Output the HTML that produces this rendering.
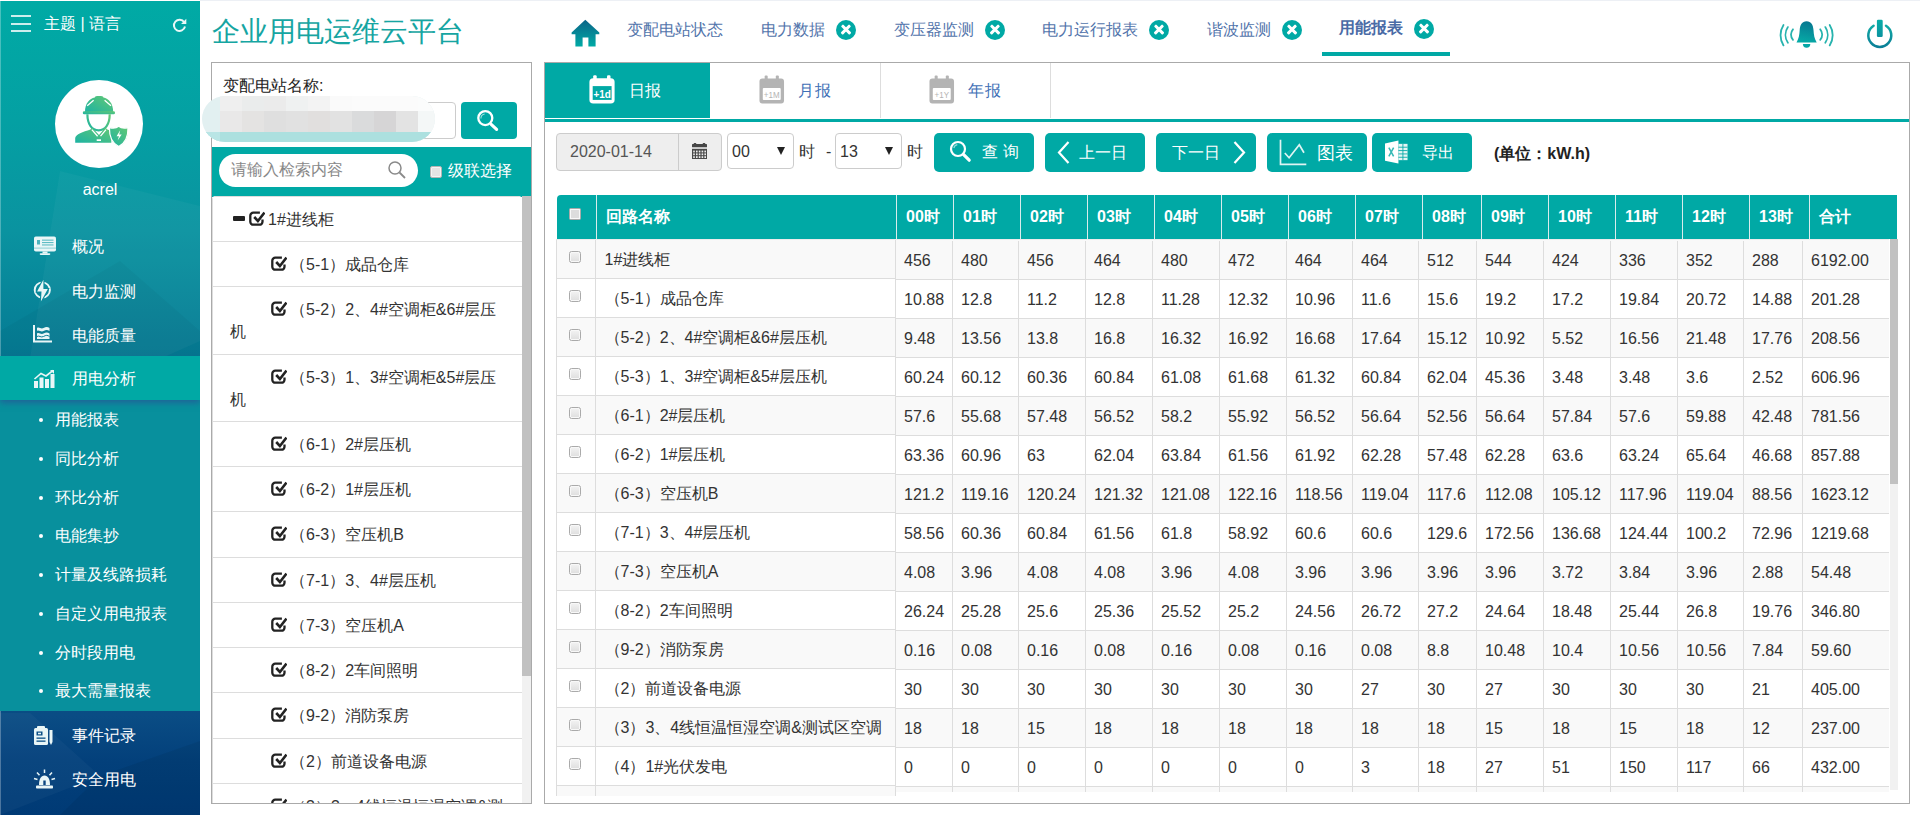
<!DOCTYPE html>
<html lang="zh"><head>
<meta charset="utf-8">
<title>企业用电运维云平台</title>
<style>
*{box-sizing:border-box;margin:0;padding:0}
html,body{width:1920px;height:815px;overflow:hidden;background:#fff;font-family:"Liberation Sans",sans-serif;font-size:16px;color:#333}
.abs{position:absolute}
#topstrip{position:absolute;left:200px;top:0;width:1720px;height:1px;background:#edf0f5}
/* sidebar */
#side{position:absolute;left:0;top:1px;width:200px;height:814px;overflow:hidden;
 background:linear-gradient(180deg,#00aaa5 0px,#04a0a3 120px,#0a93a0 230px,#067d95 340px,#056a8f 420px,#0a4c84 715px,#03407b 760px,#003a75 814px)}
#side .poly{position:absolute;left:0;top:0}
#side .ham{position:absolute;left:11px;top:14px;width:20px;height:17px}
#side .ham i{position:absolute;left:0;width:20px;height:2px;background:rgba(255,255,255,.8)}
#side .theme{position:absolute;left:44px;top:12px;font-size:16px;line-height:22px;color:#fff;white-space:nowrap}
#side .refresh{position:absolute;left:172px;top:17px}
#side .avatar{position:absolute;left:55px;top:78.500px;width:88px;height:88px;border-radius:50%;background:#fff}
#side .uname{position:absolute;left:0;top:178px;width:200px;text-align:center;color:#fff;font-size:16px;line-height:22px}
.mi{position:absolute;left:0;width:200px;height:44px;color:#fff;font-size:16px;line-height:44px;padding-left:72px;white-space:nowrap}
.mi svg{position:absolute;left:33px;top:11px}
.mi.act{background:#00a9a5;box-shadow:0 3px 6px rgba(45,75,150,.62);z-index:3}
.mi.act svg{top:12px}
#sub{position:absolute;left:0;top:399px;width:200px;height:311px;background:#08909d}
.si{position:absolute;left:55px;color:#fff;font-size:16px;line-height:22px;white-space:nowrap}
.si:before{content:"";position:absolute;left:-16px;top:9px;width:4px;height:4px;border-radius:50%;background:#fff}
/* header */
#title{position:absolute;left:212px;top:12px;font-size:28px;line-height:40px;color:#16a5a2;white-space:nowrap;letter-spacing:0px}
.tab{position:absolute;top:19px;font-size:16px;line-height:22px;color:#5274ab;white-space:nowrap}
.tab.on{font-weight:bold;top:17px;color:#4a6ba6}
.cl{position:absolute;width:20px;height:20px;border-radius:50%;background:#00a9a5}
.cl:before,.cl:after{content:"";position:absolute;left:4px;top:8.3px;width:12px;height:3.4px;border-radius:1px;background:#fff;transform:rotate(45deg)}
.cl:after{transform:rotate(-45deg)}
#uline{position:absolute;left:1322px;top:52px;width:128px;height:4px;background:#00a9a5}
/* panels */
#lp{position:absolute;left:211px;top:62px;width:321px;height:742px;border:1px solid #aaa;background:#fff;overflow:hidden}
#mp{position:absolute;left:544px;top:62px;width:1366px;height:742px;border:1px solid #aaa;background:#fff;overflow:hidden}
/* left panel */
#lp .lbl{position:absolute;left:11px;top:12px;font-size:16px;line-height:22px;color:#222}
#lp .inp{position:absolute;left:10px;top:39px;width:234px;height:37px;border:1px solid #ccc;border-radius:4px;background:#fff}
#lp .sbtn{position:absolute;left:249px;top:39px;width:56px;height:37px;border-radius:4px;background:#00a9a5}
#blur{position:absolute;left:202px;top:96px;width:233px;height:46px;border-radius:23px;background:#e2f0f1;overflow:hidden}
#blur i{position:absolute;display:block}
#lp .bar{position:absolute;left:0;top:84px;width:319px;height:50px;background:#00a9a5}
#lp .pill{position:absolute;left:7px;top:7px;width:199px;height:33px;border-radius:17px;background:#fff}
#lp .pill>span{position:absolute;left:12px;top:5px;font-size:16px;line-height:22px;color:#888}
#lp .ccb{position:absolute;left:218px;top:19px;width:12px;height:12px;border:1px solid #b5b5b5;border-radius:2px;background:#e4e4e4;box-shadow:inset 0 0 0 1px #f4f4f4}
#lp .ctx{position:absolute;left:236px;top:13px;color:#fff;font-size:16px;line-height:22px;white-space:nowrap}
#tree{position:absolute;left:0;top:133px;width:310px;height:610px;overflow:hidden;background:#fff;border-radius:4px 4px 0 0}
#tsb{position:absolute;left:310px;top:133px;width:9px;height:610px;background:#f1f1f1}
#tsb i{position:absolute;left:0;top:0;width:9px;height:480px;background:#c1c1c1}
.ti{position:absolute;left:0;width:310px;padding:11.75px 12px 0 17px;border-top:1px solid #ddd;border-left:1px solid #ddd;line-height:22.7px;font-size:16px;color:#333;white-space:nowrap}
.ti .minus{display:inline-block;width:12px;height:4.5px;background:#222;border-radius:1px;vertical-align:middle;margin:0 4px 4px 3px}
.ti .ind{display:inline-block;width:41px;height:1px}
.ti .chk{vertical-align:-2px}
.ti .t0{margin-left:3px}
.ti .t1{margin-left:3px}
/* main panel */
.st{position:absolute;top:0;width:170px;height:55px;border-right:1px solid #ddd;font-size:16px;line-height:55px;color:#3f70b6;white-space:nowrap}
.st.on{background:#00a9a5;color:#fff;border-right:none;width:165px}
.st svg{position:absolute;top:12px}
.st>span{position:absolute;top:0}
#sline{position:absolute;left:0;top:56px;width:1364px;height:3px;background:#00a9a5}
#dt{position:absolute;left:11px;top:70px;width:166px;height:38px;border:1px solid #ccc;border-radius:4px;background:#eee}
#dt .v{position:absolute;left:13px;top:7px;font-size:16px;line-height:22px;color:#555}
#dt .d{position:absolute;left:121px;top:0;width:1px;height:36px;background:#ccc}
.sel{position:absolute;top:70px;width:67px;height:36px;border:1px solid #ccc;border-radius:4px;background:#fff;font-size:16px;line-height:36px;color:#333;padding-left:4px}
.sel:after{content:"";position:absolute;right:8px;top:13px;border-left:4.5px solid transparent;border-right:4.5px solid transparent;border-top:8px solid #222}
.tx{position:absolute;top:78px;font-size:16px;line-height:22px;color:#333;white-space:nowrap}
.btn{position:absolute;top:70px;width:100px;height:39px;border-radius:5px;background:#00a9a5;color:#fff;font-size:16px;line-height:39px;white-space:nowrap}
.btn>span{position:absolute;top:0}
.btn svg{position:absolute}
#unit{position:absolute;left:949px;top:80px;font-size:16px;line-height:22px;font-weight:bold;color:#222;white-space:nowrap}
/* table */
.thead{position:absolute;left:12px;top:132px;width:1340px;height:44px;background:#00a9a5;border-radius:4px 0 0 0;overflow:hidden}
.hc{position:absolute;top:0;height:44px;border-left:1px solid #d9ecec;color:#fff;font-weight:bold;font-size:16px;line-height:43px;padding-left:9px;white-space:nowrap}
.hc.first{border-left:none}
.fix{position:absolute;left:11px;top:176px;width:340px;height:557px;overflow:hidden;background:#f9f9f9;border-top:1px solid #ececec;border-left:1px solid #ddd}
.main{position:absolute;left:351px;top:176px;width:993px;height:553px;overflow:hidden;background:#f9f9f9;border-top:1px solid #ececec}
#bsb{position:absolute;left:1345px;top:176px;width:8px;height:551px;background:#f1f1f1}
#bsb i{position:absolute;left:0;top:0;width:8px;height:245px;background:#c1c1c1}
.tr{position:absolute;left:0;width:100%;height:39px;background:#fff}
.tr.odd{background:#f9f9f9}
.td{position:absolute;top:0;height:39px;border-right:1px solid #ddd;border-bottom:1px solid #ddd;font-size:16px;line-height:41px;padding-left:8.5px;color:#333;white-space:nowrap;overflow:hidden}
.td.nm{padding-left:8.5px}
.main .td{line-height:39px;padding-left:8px}
.fix .td{line-height:40px}
.cb{position:absolute;left:12px;top:11px;width:12px;height:12px;border:1px solid #aaa;border-radius:2.5px;background:linear-gradient(#f3f3f3,#dedede);box-shadow:inset 0 0 0 1px #f8f8f8}
.hcb{top:13px;left:12px;border-radius:1.5px;background:#ddd}
.j{display:inline-block;text-align:justify;text-align-last:justify;white-space:nowrap}
</style>
</head>
<body>
<div id="topstrip"></div>

<!-- ============ SIDEBAR ============ -->
<div id="side">
 <svg class="poly" width="200" height="814" viewBox="0 0 200 814">
  <polygon points="0,0 200,0 200,160 0,200" fill="#fff" fill-opacity="0"></polygon>
  <polygon points="60,170 200,205 200,340 20,420" fill="#fff" fill-opacity=".035"></polygon>
  <polygon points="0,330 120,260 200,330 200,400 0,400" fill="#000" fill-opacity=".03"></polygon>
  <polygon points="0,712 30,712 100,775 0,814" fill="#fff" fill-opacity=".03"></polygon>
  <polygon points="100,775 200,740 200,814 60,814" fill="#000" fill-opacity=".06"></polygon>
 </svg>
 <div class="abs" style="left:0;top:0;width:1px;height:814px;background:rgba(255,255,255,.28)"></div>
 <div class="ham"><i style="top:0"></i><i style="top:8px"></i><i style="top:15px"></i></div>
 <div class="theme"><span class="j" style="width:77.07px">主题 | 语言</span></div>
 <svg class="refresh" width="15" height="15" viewBox="0 0 15 15"><path d="M12.2 4.2A5.6 5.6 0 1 0 13 8.6" fill="none" stroke="#e8f7f6" stroke-width="2"></path><path d="M14.3 0.8v5.2H9.1z" fill="#e8f7f6"></path></svg>
 <div class="avatar">
  <svg width="88" height="88" viewBox="0 0 88 88">
   <defs><linearGradient id="ag" x1="1" y1="0" x2="0" y2="1"><stop offset="0" stop-color="#63c873"></stop><stop offset="1" stop-color="#1db3a3"></stop></linearGradient></defs>
   <path d="M30 32C30 23.500 34.500 18.600 39.800 17.600V17.500C39.800 16.600 41.500 16.100 44.100 16.100S48.400 16.600 48.400 17.500V17.600C53.700 18.600 58.200 23.500 58.200 32Z" fill="url(#ag)"></path>
   <rect x="27.800" y="31.300" width="32.200" height="3" rx="1.400" fill="url(#ag)"></rect>
   <path d="M32.200 25.700L38.600 20.200M56 25.700L49.600 20.200" stroke="#fff" stroke-width="1.300"></path>
   <path d="M32.400 34.300C32.400 44.500 37 50.300 43.600 50.300S54.700 44.500 54.700 34.300" fill="none" stroke="url(#ag)" stroke-width="2.200"></path>
   <path d="M20.200 62.800V58C20.600 54.200 28 51.800 35.400 49.400L37.200 47.600L44 55L50.300 47.600L52.400 49.400C54 50 55.500 50.400 56.300 51V62.800Z" fill="url(#ag)"></path>
   <path d="M36.800 49.600L42.600 56.200M51 49.600L45.500 56.200" stroke="#fff" stroke-width="1.300" fill="none"></path>
   <rect x="41.700" y="59.300" width="4.300" height="1.700" fill="#fff"></rect>
   <path d="M63.700 46.300C66 48.200 69.200 48.500 73 47.600C73.200 58 70.200 63.400 63.700 66.600C57.200 63.400 54.200 58 54.400 47.600C58.200 48.500 61.400 48.200 63.700 46.300Z" fill="url(#ag)" stroke="#fff" stroke-width="1.200"></path>
   <path d="M65.200 50.300L61.600 56.300H64L62.600 60.600L66.700 54.400H64.200Z" fill="#fff"></path>
  </svg>
 </div>
 <div class="uname">acrel</div>

 <div class="mi" style="top:224px"><svg style="top:10px" width="24" height="22" viewBox="0 0 24 22"><rect x="1" y="1.500" width="22" height="15" rx="1.800" fill="#e9f6f7"></rect><rect x="4" y="5" width="3" height="4.500" fill="#4db3bd"></rect><rect x="9" y="4.600" width="11.500" height="1.100" fill="#5fbcc4"></rect><rect x="9" y="7" width="11.500" height="1.100" fill="#5fbcc4"></rect><rect x="9" y="9.400" width="11.500" height="1.100" fill="#5fbcc4"></rect><rect x="1" y="12.600" width="22" height="1" fill="#8fd0d5"></rect><rect x="9.500" y="16.500" width="5" height="2" fill="#e9f6f7"></rect><rect x="6.700" y="18.300" width="10.600" height="1.600" rx=".8" fill="#e9f6f7"></rect></svg><span class="j" style="width:32.02px">概况</span></div>
 <div class="mi" style="top:269px"><svg style="top:9px" width="24" height="24" viewBox="0 0 24 24"><circle cx="9.300" cy="11" r="7.600" fill="none" stroke="#e9f6f7" stroke-width="1.900"></circle><path d="M10.400 .8L4.100 12.500H8.500L7.900 22.500L14.800 10H10.400Z" fill="#e9f6f7" stroke="#0a8b9c" stroke-width="2.200" paint-order="stroke"></path></svg><span class="j" style="width:64.02px">电力监测</span></div>
 <div class="mi" style="top:313px"><svg style="top:9px" width="24" height="22" viewBox="0 0 24 22"><path d="M1 2v16.500h18" fill="none" stroke="#e9f6f7" stroke-width="2"></path><path d="M4 5c2-1.500 4 1.500 6.500 0s4-1.500 6 0v3c-2-1.500-3.500-1.500-6 0s-4.500-1.500-6.500 0z" fill="#e9f6f7"></path><path d="M4 10.500c2-1.500 4 1.500 6.500 0s4-1.500 6 0V16H4z" fill="#e9f6f7"></path><path d="M4 13.500c2-1.500 4 1.500 6.500 0s4-1.500 6 0" fill="none" stroke="#0b7f97" stroke-width="1"></path></svg><span class="j" style="width:64.02px">电能质量</span></div>
 <div class="mi act" style="top:355px;line-height:46px"><svg width="24" height="22" viewBox="0 0 24 22"><rect x="1" y="13" width="4" height="7" fill="#e9f6f7"></rect><rect x="6.500" y="9.500" width="4" height="10.500" fill="#e9f6f7"></rect><rect x="12" y="11" width="4" height="9" fill="#e9f6f7"></rect><rect x="17.500" y="6" width="4" height="14" fill="#e9f6f7"></rect><path d="M1.500 11l6.500-5.500 5 2.500 7-5.500" fill="none" stroke="#e9f6f7" stroke-width="1.600"></path><path d="M17 2h4v4z" fill="#e9f6f7"></path></svg><span class="j" style="width:64.02px">用电分析</span></div>
 <div id="sub">
  <div class="si" style="top:9px"><span class="j" style="width:64.02px">用能报表</span></div>
  <div class="si" style="top:48px"><span class="j" style="width:64.02px">同比分析</span></div>
  <div class="si" style="top:87px"><span class="j" style="width:64.02px">环比分析</span></div>
  <div class="si" style="top:125px"><span class="j" style="width:64.02px">电能集抄</span></div>
  <div class="si" style="top:164px"><span class="j" style="width:112.02px">计量及线路损耗</span></div>
  <div class="si" style="top:203px"><span class="j" style="width:112.02px">自定义用电报表</span></div>
  <div class="si" style="top:242px"><span class="j" style="width:80.02px">分时段用电</span></div>
  <div class="si" style="top:280px"><span class="j" style="width:96.02px">最大需量报表</span></div>
 </div>
 <div class="mi" style="top:713px"><svg width="24" height="22" viewBox="0 0 24 22"><rect x="1" y="3" width="14" height="17" rx="1.500" fill="#e9f6f7"></rect><rect x="4" y="1" width="8" height="3.500" rx="1" fill="#e9f6f7"></rect><rect x="3.500" y="6.500" width="6" height="4" fill="#0b4f86"></rect><rect x="5" y="7.700" width="3" height="1.600" fill="#e9f6f7"></rect><rect x="3.500" y="12.500" width="9" height="1.300" fill="#0b4f86"></rect><rect x="3.500" y="15.500" width="9" height="1.300" fill="#0b4f86"></rect><path d="M16.500 5h3v12l-1.500 3-1.500-3z" fill="#e9f6f7"></path></svg><span class="j" style="width:64.02px">事件记录</span></div>
 <div class="mi" style="top:757px"><svg width="24" height="22" viewBox="0 0 24 22"><path d="M6 16c0-6 2-9.500 5.500-9.500S17 10 17 16z" fill="#e9f6f7"></path><rect x="3" y="16.500" width="17" height="3" rx=".8" fill="#e9f6f7"></rect><rect x="10.300" y="11.500" width="2.400" height="4.500" fill="#0b4680"></rect><path d="M11.500 .5v3.500M4 3.500l2.500 2.800M19 3.500l-2.500 2.800M1 9.500l3.500 1M22 9.500l-3.500 1" stroke="#e9f6f7" stroke-width="1.500"></path></svg><span class="j" style="width:64.02px">安全用电</span></div>
</div>

<!-- ============ HEADER ============ -->
<div id="title"><span class="j" style="width:252.02px">企业用电运维云平台</span></div>
<svg class="abs" style="left:571px;top:19px" width="29" height="29" viewBox="0 0 29 29">
 <defs><linearGradient id="hg" x1="0" y1="0" x2="0" y2="1"><stop offset="0" stop-color="#0b6487"></stop><stop offset="1" stop-color="#00aaa5"></stop></linearGradient></defs>
 <path d="M14.300 .800L.600 13.600v1.700h3.800v12.200h7.200v-9h5.800v9h7.200V15.300h3.700v-1.700z" fill="url(#hg)"></path>
</svg>
<div class="tab" style="left:627px"><span class="j" style="width:96.02px">变配电站状态</span></div>
<div class="tab" style="left:761px"><span class="j" style="width:64.02px">电力数据</span></div><div class="cl" style="left:836px;top:20px"></div>
<div class="tab" style="left:894px"><span class="j" style="width:80.02px">变压器监测</span></div><div class="cl" style="left:985px;top:20px"></div>
<div class="tab" style="left:1042px"><span class="j" style="width:96.02px">电力运行报表</span></div><div class="cl" style="left:1149px;top:20px"></div>
<div class="tab" style="left:1207px"><span class="j" style="width:64.02px">谐波监测</span></div><div class="cl" style="left:1282px;top:20px"></div>
<div class="tab on" style="left:1339px"><span class="j" style="width:64.02px">用能报表</span></div><div class="cl" style="left:1414px;top:19px"></div>
<div id="uline"></div>
<!-- bell -->
<svg class="abs" style="left:1776px;top:18px" width="62" height="32" viewBox="0 0 62 32">
 <defs><linearGradient id="bg1" x1="0.600" y1="0" x2="0.400" y2="1"><stop offset="0" stop-color="#077790"></stop><stop offset="1" stop-color="#06aaa6"></stop></linearGradient></defs>
 <path d="M30.600 3.300C26 3.300 24 7 23.700 12C23.400 17 22.800 20.500 20.500 24.500H40.700C38.400 20.500 37.800 17 37.500 12C37.200 7 35.200 3.300 30.600 3.300Z" fill="url(#bg1)"></path>
 <path d="M26.900 26H34.300A3.700 3.700 0 0 1 26.900 26Z" fill="#06a7a6"></path>
 <path d="M7.500 7A19 19 0 0 0 7.500 27.400M11.900 9.100A14 14 0 0 0 11.900 24.800M17 11.300A8 8 0 0 0 17 21.900M53.700 7A19 19 0 0 1 53.700 27.400M49.300 9.100A14 14 0 0 1 49.300 24.800M44.200 11.300A8 8 0 0 1 44.200 21.900" fill="none" stroke="#27b3ae" stroke-width="1.800" stroke-linecap="round"></path>
</svg>
<!-- power -->
<svg class="abs" style="left:1865px;top:19px" width="30" height="31" viewBox="0 0 30 31">
 <defs><linearGradient id="pg" x1="0" y1="0" x2="0" y2="1"><stop offset="0" stop-color="#12aaa6"></stop><stop offset="1" stop-color="#0a7f97"></stop></linearGradient>
 <linearGradient id="pg2" x1="0" y1="0" x2="0" y2="1"><stop offset="0" stop-color="#08aca7"></stop><stop offset="1" stop-color="#0b93a0"></stop></linearGradient></defs>
 <path d="M8.600 6.700A11.500 11.500 0 1 0 21 6.700" fill="none" stroke="url(#pg)" stroke-width="2.500" stroke-linecap="round"></path>
 <rect x="11.900" y="0.800" width="5.800" height="17.200" rx="1.200" fill="url(#pg2)"></rect>
</svg>

<!-- ============ LEFT PANEL ============ -->
<div id="lp">
 <div class="lbl"><span class="j" style="width:100.48px">变配电站名称:</span></div>
 <div class="inp"></div>
 <div class="sbtn"><svg width="56" height="37" viewBox="0 0 56 37"><circle cx="24.300" cy="16.100" r="7" fill="none" stroke="#fff" stroke-width="2.300"></circle><path d="M30.200 22.400L35.600 27.400" stroke="#fff" stroke-width="3.200" stroke-linecap="round"></path><path d="M19.900 16.600A4.600 4.600 0 0 1 23.600 12" fill="none" stroke="#a5e2df" stroke-width="1.100"></path></svg></div>
 <div class="bar">
  <div class="pill"><span><span class="j" style="width:112.02px">请输入检索内容</span></span>
   <svg class="abs" style="left:168px;top:6px" width="20" height="20" viewBox="0 0 20 20"><circle cx="8" cy="8" r="6" fill="none" stroke="#8a8a8a" stroke-width="1.500"></circle><path d="M12.500 12.500l5.500 5.500" stroke="#8a8a8a" stroke-width="1.800"></path></svg>
  </div>
  <div class="ccb"></div>
  <div class="ctx"><span class="j" style="width:64.02px">级联选择</span></div>
 </div>
 <div id="tree">
<div class="ti" style="top:0px;height:45px"><span class="minus"></span><svg class="chk" viewBox="0 0 16 16" width="16" height="16"><path d="M10.9 1.7H4.3A3 3 0 0 0 1.3 4.7V10.7A3 3 0 0 0 4.3 13.7H10.5A3 3 0 0 0 13.5 10.7V8.4" fill="none" stroke="#222" stroke-width="2.3"></path><path d="M5.2 6L8.9 10L15.5 1.6" fill="none" stroke="#222" stroke-width="2.6"></path></svg><span class="t0"><span class="j" style="width:65.82px">1#进线柜</span></span></div>
<div class="ti" style="top:45px;height:45px"><span class="ind"></span><svg class="chk" viewBox="0 0 16 16" width="16" height="16"><path d="M10.9 1.7H4.3A3 3 0 0 0 1.3 4.7V10.7A3 3 0 0 0 4.3 13.7H10.5A3 3 0 0 0 13.5 10.7V8.4" fill="none" stroke="#222" stroke-width="2.3"></path><path d="M5.2 6L8.9 10L15.5 1.6" fill="none" stroke="#222" stroke-width="2.6"></path></svg><span class="t1"><span class="j" style="width:119.15px">（5-1）成品仓库</span></span></div>
<div class="ti" style="top:90px;height:68px"><span class="ind"></span><svg class="chk" viewBox="0 0 16 16" width="16" height="16"><path d="M10.9 1.7H4.3A3 3 0 0 0 1.3 4.7V10.7A3 3 0 0 0 4.3 13.7H10.5A3 3 0 0 0 13.5 10.7V8.4" fill="none" stroke="#222" stroke-width="2.3"></path><path d="M5.2 6L8.9 10L15.5 1.6" fill="none" stroke="#222" stroke-width="2.6"></path></svg><span class="t1"><span class="j" style="width:206.32px">（5-2）2、4#空调柜&amp;6#层压</span><br><span class="j" style="width:16.02px">机</span></span></div>
<div class="ti" style="top:158px;height:67px"><span class="ind"></span><svg class="chk" viewBox="0 0 16 16" width="16" height="16"><path d="M10.9 1.7H4.3A3 3 0 0 0 1.3 4.7V10.7A3 3 0 0 0 4.3 13.7H10.5A3 3 0 0 0 13.5 10.7V8.4" fill="none" stroke="#222" stroke-width="2.3"></path><path d="M5.2 6L8.9 10L15.5 1.6" fill="none" stroke="#222" stroke-width="2.6"></path></svg><span class="t1"><span class="j" style="width:206.32px">（5-3）1、3#空调柜&amp;5#层压</span><br><span class="j" style="width:16.02px">机</span></span></div>
<div class="ti" style="top:225px;height:45px"><span class="ind"></span><svg class="chk" viewBox="0 0 16 16" width="16" height="16"><path d="M10.9 1.7H4.3A3 3 0 0 0 1.3 4.7V10.7A3 3 0 0 0 4.3 13.7H10.5A3 3 0 0 0 13.5 10.7V8.4" fill="none" stroke="#222" stroke-width="2.3"></path><path d="M5.2 6L8.9 10L15.5 1.6" fill="none" stroke="#222" stroke-width="2.6"></path></svg><span class="t1"><span class="j" style="width:120.95px">（6-1）2#层压机</span></span></div>
<div class="ti" style="top:270px;height:45px"><span class="ind"></span><svg class="chk" viewBox="0 0 16 16" width="16" height="16"><path d="M10.9 1.7H4.3A3 3 0 0 0 1.3 4.7V10.7A3 3 0 0 0 4.3 13.7H10.5A3 3 0 0 0 13.5 10.7V8.4" fill="none" stroke="#222" stroke-width="2.3"></path><path d="M5.2 6L8.9 10L15.5 1.6" fill="none" stroke="#222" stroke-width="2.6"></path></svg><span class="t1"><span class="j" style="width:120.95px">（6-2）1#层压机</span></span></div>
<div class="ti" style="top:315px;height:46px"><span class="ind"></span><svg class="chk" viewBox="0 0 16 16" width="16" height="16"><path d="M10.9 1.7H4.3A3 3 0 0 0 1.3 4.7V10.7A3 3 0 0 0 4.3 13.7H10.5A3 3 0 0 0 13.5 10.7V8.4" fill="none" stroke="#222" stroke-width="2.3"></path><path d="M5.2 6L8.9 10L15.5 1.6" fill="none" stroke="#222" stroke-width="2.6"></path></svg><span class="t1"><span class="j" style="width:113.82px">（6-3）空压机B</span></span></div>
<div class="ti" style="top:361px;height:45px"><span class="ind"></span><svg class="chk" viewBox="0 0 16 16" width="16" height="16"><path d="M10.9 1.7H4.3A3 3 0 0 0 1.3 4.7V10.7A3 3 0 0 0 4.3 13.7H10.5A3 3 0 0 0 13.5 10.7V8.4" fill="none" stroke="#222" stroke-width="2.3"></path><path d="M5.2 6L8.9 10L15.5 1.6" fill="none" stroke="#222" stroke-width="2.6"></path></svg><span class="t1"><span class="j" style="width:145.85px">（7-1）3、4#层压机</span></span></div>
<div class="ti" style="top:406px;height:45px"><span class="ind"></span><svg class="chk" viewBox="0 0 16 16" width="16" height="16"><path d="M10.9 1.7H4.3A3 3 0 0 0 1.3 4.7V10.7A3 3 0 0 0 4.3 13.7H10.5A3 3 0 0 0 13.5 10.7V8.4" fill="none" stroke="#222" stroke-width="2.3"></path><path d="M5.2 6L8.9 10L15.5 1.6" fill="none" stroke="#222" stroke-width="2.6"></path></svg><span class="t1"><span class="j" style="width:113.82px">（7-3）空压机A</span></span></div>
<div class="ti" style="top:451px;height:45px"><span class="ind"></span><svg class="chk" viewBox="0 0 16 16" width="16" height="16"><path d="M10.9 1.7H4.3A3 3 0 0 0 1.3 4.7V10.7A3 3 0 0 0 4.3 13.7H10.5A3 3 0 0 0 13.5 10.7V8.4" fill="none" stroke="#222" stroke-width="2.3"></path><path d="M5.2 6L8.9 10L15.5 1.6" fill="none" stroke="#222" stroke-width="2.6"></path></svg><span class="t1"><span class="j" style="width:128.06px">（8-2）2车间照明</span></span></div>
<div class="ti" style="top:496px;height:46px"><span class="ind"></span><svg class="chk" viewBox="0 0 16 16" width="16" height="16"><path d="M10.9 1.7H4.3A3 3 0 0 0 1.3 4.7V10.7A3 3 0 0 0 4.3 13.7H10.5A3 3 0 0 0 13.5 10.7V8.4" fill="none" stroke="#222" stroke-width="2.3"></path><path d="M5.2 6L8.9 10L15.5 1.6" fill="none" stroke="#222" stroke-width="2.6"></path></svg><span class="t1"><span class="j" style="width:119.15px">（9-2）消防泵房</span></span></div>
<div class="ti" style="top:542px;height:45px"><span class="ind"></span><svg class="chk" viewBox="0 0 16 16" width="16" height="16"><path d="M10.9 1.7H4.3A3 3 0 0 0 1.3 4.7V10.7A3 3 0 0 0 4.3 13.7H10.5A3 3 0 0 0 13.5 10.7V8.4" fill="none" stroke="#222" stroke-width="2.3"></path><path d="M5.2 6L8.9 10L15.5 1.6" fill="none" stroke="#222" stroke-width="2.6"></path></svg><span class="t1"><span class="j" style="width:136.93px">（2）前道设备电源</span></span></div>
<div class="ti" style="top:587px;height:68px"><span class="ind"></span><svg class="chk" viewBox="0 0 16 16" width="16" height="16"><path d="M10.9 1.7H4.3A3 3 0 0 0 1.3 4.7V10.7A3 3 0 0 0 4.3 13.7H10.5A3 3 0 0 0 13.5 10.7V8.4" fill="none" stroke="#222" stroke-width="2.3"></path><path d="M5.2 6L8.9 10L15.5 1.6" fill="none" stroke="#222" stroke-width="2.6"></path></svg><span class="t1"><span class="j" style="width:213.40px">（3）3、4线恒温恒湿空调&amp;测</span><br><span class="j" style="width:64.02px">试区空调</span></span></div>
 </div>
 <div id="tsb"><i></i></div>
</div>
<div id="blur">
 <i style="left:18px;top:0;width:22px;height:15px;background:#efefef"></i><i style="left:18px;top:15px;width:22px;height:22px;background:#e9e8e8"></i>
 <i style="left:40px;top:0;width:22px;height:15px;background:#eaecec"></i><i style="left:40px;top:15px;width:22px;height:22px;background:#e4e3e2"></i>
 <i style="left:62px;top:0;width:22px;height:15px;background:#ebebeb"></i><i style="left:62px;top:15px;width:22px;height:22px;background:#dfdfdf"></i>
 <i style="left:84px;top:0;width:22px;height:15px;background:#eff1f1"></i><i style="left:84px;top:15px;width:22px;height:22px;background:#e1e1e1"></i>
 <i style="left:106px;top:0;width:22px;height:15px;background:#f3f3f3"></i><i style="left:106px;top:15px;width:22px;height:22px;background:#e1dfde"></i>
 <i style="left:128px;top:0;width:22px;height:15px;background:#fafafa"></i><i style="left:128px;top:15px;width:22px;height:22px;background:#e2e2e2"></i>
 <i style="left:150px;top:0;width:22px;height:15px;background:#fbfbfb"></i><i style="left:150px;top:15px;width:22px;height:22px;background:#dadbdc"></i>
 <i style="left:172px;top:0;width:22px;height:15px;background:#fbfbfb"></i><i style="left:172px;top:15px;width:22px;height:22px;background:#d6d5d6"></i>
 <i style="left:194px;top:0;width:22px;height:15px;background:#fbfbfb"></i><i style="left:194px;top:15px;width:22px;height:22px;background:#e3e3e3"></i>
 <i style="left:216px;top:0;width:18px;height:15px;background:#fbfcfc"></i><i style="left:216px;top:15px;width:18px;height:22px;background:#f4f7f7"></i>
 <i style="left:0;top:36px;width:234px;height:10px;background:#ace0df"></i><i style="left:0;top:36px;width:18px;height:10px;background:#b9e5e5"></i>
</div>

<!-- ============ MAIN PANEL ============ -->
<div id="mp">
 <div class="st on" style="left:0">
  <svg style="left:44px" width="26" height="29" viewBox="0 0 26 29"><rect x="0.400" y="3.300" width="25.200" height="25.300" rx="3.800" fill="#fff"></rect><rect x="3.700" y="11.100" width="18.900" height="13.800" fill="#00a9a5"></rect><rect x="4.200" y="0.300" width="3.500" height="5" rx="1.200" fill="#fff"></rect><rect x="18" y="0.300" width="3.500" height="5" rx="1.200" fill="#fff"></rect><text x="13.200" y="22.800" font-family="Liberation Sans,sans-serif" font-size="10" font-weight="bold" fill="#fff" text-anchor="middle">+1d</text></svg>
  <span style="left:84px"><span class="j" style="width:32.02px">日报</span></span></div>
 <div class="st" style="left:165px;width:171px">
  <svg style="left:49px" width="25.500" height="29" viewBox="0 0 27 29" preserveAspectRatio="none"><rect x="0.500" y="3.500" width="26" height="25" rx="3" fill="#b4b4b4"></rect><rect x="4" y="13" width="19" height="12" rx="1" fill="#fff"></rect><rect x="6" y="0.500" width="3.200" height="6" rx="1" fill="#b4b4b4"></rect><rect x="17.800" y="0.500" width="3.200" height="6" rx="1" fill="#b4b4b4"></rect><text x="13.500" y="23" font-family="Liberation Sans,sans-serif" font-size="8.500" fill="#b4b4b4" text-anchor="middle">+1M</text></svg>
  <span style="left:88px;letter-spacing:1px"><span class="j" style="width:34.02px">月报</span></span></div>
 <div class="st" style="left:336px">
  <svg style="left:48px" width="25.500" height="29" viewBox="0 0 27 29" preserveAspectRatio="none"><rect x="0.500" y="3.500" width="26" height="25" rx="3" fill="#b4b4b4"></rect><rect x="4" y="13" width="19" height="12" rx="1" fill="#fff"></rect><rect x="6" y="0.500" width="3.200" height="6" rx="1" fill="#b4b4b4"></rect><rect x="17.800" y="0.500" width="3.200" height="6" rx="1" fill="#b4b4b4"></rect><text x="13.500" y="23" font-family="Liberation Sans,sans-serif" font-size="8.500" fill="#b4b4b4" text-anchor="middle">+1Y</text></svg>
  <span style="left:87px;letter-spacing:1px"><span class="j" style="width:34.02px">年报</span></span></div>
 <div id="sline"></div>

 <div id="dt"><span class="v">2020-01-14</span><i class="d"></i>
  <svg class="abs" style="left:135px;top:9px" width="15" height="16" viewBox="0 0 15 16"><rect x="0" y="1" width="15" height="3.300" rx=".6" fill="#464646"></rect><rect x="1.800" y="0" width="2.400" height="2" rx=".5" fill="#464646"></rect><rect x="10.800" y="0" width="2.400" height="2" rx=".5" fill="#464646"></rect><rect x="0" y="5.800" width="15" height="10.200" fill="#4a4a4a"></rect><g fill="#eee"><rect x="1.2" y="7.6" width="1.600" height="1.800"></rect><rect x="4.0" y="7.6" width="1.600" height="1.800"></rect><rect x="6.8" y="7.6" width="1.600" height="1.800"></rect><rect x="9.6" y="7.6" width="1.600" height="1.800"></rect><rect x="12.4" y="7.6" width="1.600" height="1.800"></rect><rect x="1.2" y="10.4" width="1.600" height="1.800"></rect><rect x="4.0" y="10.4" width="1.600" height="1.800"></rect><rect x="6.8" y="10.4" width="1.600" height="1.800"></rect><rect x="9.6" y="10.4" width="1.600" height="1.800"></rect><rect x="12.4" y="10.4" width="1.600" height="1.800"></rect><rect x="1.2" y="13.2" width="1.600" height="1.800"></rect><rect x="4.0" y="13.2" width="1.600" height="1.800"></rect><rect x="6.8" y="13.2" width="1.600" height="1.800"></rect><rect x="9.6" y="13.2" width="1.600" height="1.800"></rect><rect x="12.4" y="13.2" width="1.600" height="1.800"></rect></g></svg>
 </div>
 <div class="sel" style="left:182px">00</div>
 <div class="tx" style="left:254px"><span class="j" style="width:16.02px">时</span></div>
 <div class="tx" style="left:281px">-</div>
 <div class="sel" style="left:290px">13</div>
 <div class="tx" style="left:362px"><span class="j" style="width:16.02px">时</span></div>

 <div class="btn" style="left:389px">
  <svg style="left:15px;top:7px" width="24" height="24" viewBox="0 0 24 24"><circle cx="9" cy="9" r="7" fill="none" stroke="#fff" stroke-width="2.200"></circle><path d="M14.400 14.400l5.800 5.800" stroke="#fff" stroke-width="3.200" stroke-linecap="round"></path><path d="M4.800 8a4.400 4.400 0 0 1 3.500-3.400" fill="none" stroke="#8fdcda" stroke-width="1.200"></path></svg>
  <span style="left:48px;top:-1px;letter-spacing:5px"><span class="j" style="width:42.02px">查询</span></span></div>
 <div class="btn" style="left:500px">
  <svg style="left:12px;top:8px" width="13" height="23" viewBox="0 0 13 23"><path d="M11.500 1L2 11.500 11.500 22" fill="none" stroke="#fff" stroke-width="2.200"></path></svg>
  <span style="left:34px"><span class="j" style="width:48.02px">上一日</span></span></div>
 <div class="btn" style="left:611px">
  <span style="left:16px"><span class="j" style="width:48.02px">下一日</span></span>
  <svg style="left:77px;top:8px" width="13" height="23" viewBox="0 0 13 23"><path d="M1.500 1L11 11.500 1.500 22" fill="none" stroke="#fff" stroke-width="2.200"></path></svg></div>
 <div class="btn" style="left:722px">
  <svg style="left:12px;top:6px" width="29" height="27" viewBox="0 0 29 27"><path d="M1.500 .8V25.400H27.300" fill="none" stroke="#dff4f3" stroke-width="1.700"></path><path d="M5.800 14L10.100 18.700L20.300 5.800L25 13.700" fill="none" stroke="#dff4f3" stroke-width="1.700"></path></svg>
  <span style="left:50px;top:1px;font-size:18px"><span class="j" style="width:36.02px">图表</span></span></div>
 <div class="btn" style="left:827px">
  <svg style="left:12.500px;top:7px" width="23" height="24" viewBox="0 0 24 25"><path d="M0 3.500L14 .500v24L0 21.500z" fill="#fff"></path><rect x="14" y="4" width="9.500" height="17" fill="#e4f5f4"></rect><g stroke="#00a9a5" stroke-width=".9"><path d="M14 7.500h9.500M14 11h9.500M14 14.500h9.500M14 18h9.500M18.700 4v17"></path></g><path d="M4 8l5 9M9 8l-5 9" stroke="#35b9b5" stroke-width="1.600"></path></svg>
  <span style="left:50px"><span class="j" style="width:32.02px">导出</span></span></div>
 <div id="unit"><span class="j" style="width:96.02px">(单位：kW.h)</span></div>

<div class="thead">
<div class="hc first" style="left:0px;width:39px"><span class="cb hcb"></span></div>
<div class="hc" style="left:39px;width:300px"><span class="j" style="width:64.02px">回路名称</span></div>
<div class="hc" style="left:339px;width:57px"><span class="j" style="width:33.82px">00时</span></div>
<div class="hc" style="left:396px;width:67px"><span class="j" style="width:33.82px">01时</span></div>
<div class="hc" style="left:463px;width:67px"><span class="j" style="width:33.82px">02时</span></div>
<div class="hc" style="left:530px;width:67px"><span class="j" style="width:33.82px">03时</span></div>
<div class="hc" style="left:597px;width:67px"><span class="j" style="width:33.82px">04时</span></div>
<div class="hc" style="left:664px;width:67px"><span class="j" style="width:33.82px">05时</span></div>
<div class="hc" style="left:731px;width:67px"><span class="j" style="width:33.82px">06时</span></div>
<div class="hc" style="left:798px;width:67px"><span class="j" style="width:33.82px">07时</span></div>
<div class="hc" style="left:865px;width:59px"><span class="j" style="width:33.82px">08时</span></div>
<div class="hc" style="left:924px;width:67px"><span class="j" style="width:33.82px">09时</span></div>
<div class="hc" style="left:991px;width:67px"><span class="j" style="width:33.82px">10时</span></div>
<div class="hc" style="left:1058px;width:67px"><span class="j" style="width:32.95px">11时</span></div>
<div class="hc" style="left:1125px;width:67px"><span class="j" style="width:33.82px">12时</span></div>
<div class="hc" style="left:1192px;width:60px"><span class="j" style="width:33.82px">13时</span></div>
<div class="hc" style="left:1252px;width:88px"><span class="j" style="width:32.02px">合计</span></div>
</div>
<div class="fix">
<div class="tr odd" style="top:0px">
<div class="td first" style="left:0;width:39px"><span class="cb"></span></div>
<div class="td nm" style="left:39px;width:300px"><span class="j" style="width:65.82px">1#进线柜</span></div>
</div>
<div class="tr even" style="top:39px">
<div class="td first" style="left:0;width:39px"><span class="cb"></span></div>
<div class="td nm" style="left:39px;width:300px"><span class="j" style="width:119.15px">（5-1）成品仓库</span></div>
</div>
<div class="tr odd" style="top:78px">
<div class="td first" style="left:0;width:39px"><span class="cb"></span></div>
<div class="td nm" style="left:39px;width:300px"><span class="j" style="width:222.32px">（5-2）2、4#空调柜&amp;6#层压机</span></div>
</div>
<div class="tr even" style="top:117px">
<div class="td first" style="left:0;width:39px"><span class="cb"></span></div>
<div class="td nm" style="left:39px;width:300px"><span class="j" style="width:222.32px">（5-3）1、3#空调柜&amp;5#层压机</span></div>
</div>
<div class="tr odd" style="top:156px">
<div class="td first" style="left:0;width:39px"><span class="cb"></span></div>
<div class="td nm" style="left:39px;width:300px"><span class="j" style="width:120.95px">（6-1）2#层压机</span></div>
</div>
<div class="tr even" style="top:195px">
<div class="td first" style="left:0;width:39px"><span class="cb"></span></div>
<div class="td nm" style="left:39px;width:300px"><span class="j" style="width:120.95px">（6-2）1#层压机</span></div>
</div>
<div class="tr odd" style="top:234px">
<div class="td first" style="left:0;width:39px"><span class="cb"></span></div>
<div class="td nm" style="left:39px;width:300px"><span class="j" style="width:113.82px">（6-3）空压机B</span></div>
</div>
<div class="tr even" style="top:273px">
<div class="td first" style="left:0;width:39px"><span class="cb"></span></div>
<div class="td nm" style="left:39px;width:300px"><span class="j" style="width:145.85px">（7-1）3、4#层压机</span></div>
</div>
<div class="tr odd" style="top:312px">
<div class="td first" style="left:0;width:39px"><span class="cb"></span></div>
<div class="td nm" style="left:39px;width:300px"><span class="j" style="width:113.82px">（7-3）空压机A</span></div>
</div>
<div class="tr even" style="top:351px">
<div class="td first" style="left:0;width:39px"><span class="cb"></span></div>
<div class="td nm" style="left:39px;width:300px"><span class="j" style="width:128.06px">（8-2）2车间照明</span></div>
</div>
<div class="tr odd" style="top:390px">
<div class="td first" style="left:0;width:39px"><span class="cb"></span></div>
<div class="td nm" style="left:39px;width:300px"><span class="j" style="width:119.15px">（9-2）消防泵房</span></div>
</div>
<div class="tr even" style="top:429px">
<div class="td first" style="left:0;width:39px"><span class="cb"></span></div>
<div class="td nm" style="left:39px;width:300px"><span class="j" style="width:136.93px">（2）前道设备电源</span></div>
</div>
<div class="tr odd" style="top:468px">
<div class="td first" style="left:0;width:39px"><span class="cb"></span></div>
<div class="td nm" style="left:39px;width:300px"><span class="j" style="width:277.40px">（3）3、4线恒温恒湿空调&amp;测试区空调</span></div>
</div>
<div class="tr even" style="top:507px">
<div class="td first" style="left:0;width:39px"><span class="cb"></span></div>
<div class="td nm" style="left:39px;width:300px"><span class="j" style="width:122.73px">（4）1#光伏发电</span></div>
</div>
<div class="tr odd" style="top:546px">
<div class="td first" style="left:0;width:39px"></div>
<div class="td nm" style="left:39px;width:300px"></div>
</div>
</div>
<div class="main">
<div class="tr odd" style="top:1px">
<div class="td" style="left:0px;width:57px">456</div>
<div class="td" style="left:57px;width:66px">480</div>
<div class="td" style="left:123px;width:67px">456</div>
<div class="td" style="left:190px;width:67px">464</div>
<div class="td" style="left:257px;width:67px">480</div>
<div class="td" style="left:324px;width:67px">472</div>
<div class="td" style="left:391px;width:66px">464</div>
<div class="td" style="left:457px;width:66px">464</div>
<div class="td" style="left:523px;width:58px">512</div>
<div class="td" style="left:581px;width:67px">544</div>
<div class="td" style="left:648px;width:67px">424</div>
<div class="td" style="left:715px;width:67px">336</div>
<div class="td" style="left:782px;width:66px">352</div>
<div class="td" style="left:848px;width:59px">288</div>
<div class="td" style="left:907px;width:86px;border-right:none">6192.00</div>
</div>
<div class="tr even" style="top:40px">
<div class="td" style="left:0px;width:57px">10.88</div>
<div class="td" style="left:57px;width:66px">12.8</div>
<div class="td" style="left:123px;width:67px">11.2</div>
<div class="td" style="left:190px;width:67px">12.8</div>
<div class="td" style="left:257px;width:67px">11.28</div>
<div class="td" style="left:324px;width:67px">12.32</div>
<div class="td" style="left:391px;width:66px">10.96</div>
<div class="td" style="left:457px;width:66px">11.6</div>
<div class="td" style="left:523px;width:58px">15.6</div>
<div class="td" style="left:581px;width:67px">19.2</div>
<div class="td" style="left:648px;width:67px">17.2</div>
<div class="td" style="left:715px;width:67px">19.84</div>
<div class="td" style="left:782px;width:66px">20.72</div>
<div class="td" style="left:848px;width:59px">14.88</div>
<div class="td" style="left:907px;width:86px;border-right:none">201.28</div>
</div>
<div class="tr odd" style="top:79px">
<div class="td" style="left:0px;width:57px">9.48</div>
<div class="td" style="left:57px;width:66px">13.56</div>
<div class="td" style="left:123px;width:67px">13.8</div>
<div class="td" style="left:190px;width:67px">16.8</div>
<div class="td" style="left:257px;width:67px">16.32</div>
<div class="td" style="left:324px;width:67px">16.92</div>
<div class="td" style="left:391px;width:66px">16.68</div>
<div class="td" style="left:457px;width:66px">17.64</div>
<div class="td" style="left:523px;width:58px">15.12</div>
<div class="td" style="left:581px;width:67px">10.92</div>
<div class="td" style="left:648px;width:67px">5.52</div>
<div class="td" style="left:715px;width:67px">16.56</div>
<div class="td" style="left:782px;width:66px">21.48</div>
<div class="td" style="left:848px;width:59px">17.76</div>
<div class="td" style="left:907px;width:86px;border-right:none">208.56</div>
</div>
<div class="tr even" style="top:118px">
<div class="td" style="left:0px;width:57px">60.24</div>
<div class="td" style="left:57px;width:66px">60.12</div>
<div class="td" style="left:123px;width:67px">60.36</div>
<div class="td" style="left:190px;width:67px">60.84</div>
<div class="td" style="left:257px;width:67px">61.08</div>
<div class="td" style="left:324px;width:67px">61.68</div>
<div class="td" style="left:391px;width:66px">61.32</div>
<div class="td" style="left:457px;width:66px">60.84</div>
<div class="td" style="left:523px;width:58px">62.04</div>
<div class="td" style="left:581px;width:67px">45.36</div>
<div class="td" style="left:648px;width:67px">3.48</div>
<div class="td" style="left:715px;width:67px">3.48</div>
<div class="td" style="left:782px;width:66px">3.6</div>
<div class="td" style="left:848px;width:59px">2.52</div>
<div class="td" style="left:907px;width:86px;border-right:none">606.96</div>
</div>
<div class="tr odd" style="top:157px">
<div class="td" style="left:0px;width:57px">57.6</div>
<div class="td" style="left:57px;width:66px">55.68</div>
<div class="td" style="left:123px;width:67px">57.48</div>
<div class="td" style="left:190px;width:67px">56.52</div>
<div class="td" style="left:257px;width:67px">58.2</div>
<div class="td" style="left:324px;width:67px">55.92</div>
<div class="td" style="left:391px;width:66px">56.52</div>
<div class="td" style="left:457px;width:66px">56.64</div>
<div class="td" style="left:523px;width:58px">52.56</div>
<div class="td" style="left:581px;width:67px">56.64</div>
<div class="td" style="left:648px;width:67px">57.84</div>
<div class="td" style="left:715px;width:67px">57.6</div>
<div class="td" style="left:782px;width:66px">59.88</div>
<div class="td" style="left:848px;width:59px">42.48</div>
<div class="td" style="left:907px;width:86px;border-right:none">781.56</div>
</div>
<div class="tr even" style="top:196px">
<div class="td" style="left:0px;width:57px">63.36</div>
<div class="td" style="left:57px;width:66px">60.96</div>
<div class="td" style="left:123px;width:67px">63</div>
<div class="td" style="left:190px;width:67px">62.04</div>
<div class="td" style="left:257px;width:67px">63.84</div>
<div class="td" style="left:324px;width:67px">61.56</div>
<div class="td" style="left:391px;width:66px">61.92</div>
<div class="td" style="left:457px;width:66px">62.28</div>
<div class="td" style="left:523px;width:58px">57.48</div>
<div class="td" style="left:581px;width:67px">62.28</div>
<div class="td" style="left:648px;width:67px">63.6</div>
<div class="td" style="left:715px;width:67px">63.24</div>
<div class="td" style="left:782px;width:66px">65.64</div>
<div class="td" style="left:848px;width:59px">46.68</div>
<div class="td" style="left:907px;width:86px;border-right:none">857.88</div>
</div>
<div class="tr odd" style="top:235px">
<div class="td" style="left:0px;width:57px">121.2</div>
<div class="td" style="left:57px;width:66px">119.16</div>
<div class="td" style="left:123px;width:67px">120.24</div>
<div class="td" style="left:190px;width:67px">121.32</div>
<div class="td" style="left:257px;width:67px">121.08</div>
<div class="td" style="left:324px;width:67px">122.16</div>
<div class="td" style="left:391px;width:66px">118.56</div>
<div class="td" style="left:457px;width:66px">119.04</div>
<div class="td" style="left:523px;width:58px">117.6</div>
<div class="td" style="left:581px;width:67px">112.08</div>
<div class="td" style="left:648px;width:67px">105.12</div>
<div class="td" style="left:715px;width:67px">117.96</div>
<div class="td" style="left:782px;width:66px">119.04</div>
<div class="td" style="left:848px;width:59px">88.56</div>
<div class="td" style="left:907px;width:86px;border-right:none">1623.12</div>
</div>
<div class="tr even" style="top:274px">
<div class="td" style="left:0px;width:57px">58.56</div>
<div class="td" style="left:57px;width:66px">60.36</div>
<div class="td" style="left:123px;width:67px">60.84</div>
<div class="td" style="left:190px;width:67px">61.56</div>
<div class="td" style="left:257px;width:67px">61.8</div>
<div class="td" style="left:324px;width:67px">58.92</div>
<div class="td" style="left:391px;width:66px">60.6</div>
<div class="td" style="left:457px;width:66px">60.6</div>
<div class="td" style="left:523px;width:58px">129.6</div>
<div class="td" style="left:581px;width:67px">172.56</div>
<div class="td" style="left:648px;width:67px">136.68</div>
<div class="td" style="left:715px;width:67px">124.44</div>
<div class="td" style="left:782px;width:66px">100.2</div>
<div class="td" style="left:848px;width:59px">72.96</div>
<div class="td" style="left:907px;width:86px;border-right:none">1219.68</div>
</div>
<div class="tr odd" style="top:313px">
<div class="td" style="left:0px;width:57px">4.08</div>
<div class="td" style="left:57px;width:66px">3.96</div>
<div class="td" style="left:123px;width:67px">4.08</div>
<div class="td" style="left:190px;width:67px">4.08</div>
<div class="td" style="left:257px;width:67px">3.96</div>
<div class="td" style="left:324px;width:67px">4.08</div>
<div class="td" style="left:391px;width:66px">3.96</div>
<div class="td" style="left:457px;width:66px">3.96</div>
<div class="td" style="left:523px;width:58px">3.96</div>
<div class="td" style="left:581px;width:67px">3.96</div>
<div class="td" style="left:648px;width:67px">3.72</div>
<div class="td" style="left:715px;width:67px">3.84</div>
<div class="td" style="left:782px;width:66px">3.96</div>
<div class="td" style="left:848px;width:59px">2.88</div>
<div class="td" style="left:907px;width:86px;border-right:none">54.48</div>
</div>
<div class="tr even" style="top:352px">
<div class="td" style="left:0px;width:57px">26.24</div>
<div class="td" style="left:57px;width:66px">25.28</div>
<div class="td" style="left:123px;width:67px">25.6</div>
<div class="td" style="left:190px;width:67px">25.36</div>
<div class="td" style="left:257px;width:67px">25.52</div>
<div class="td" style="left:324px;width:67px">25.2</div>
<div class="td" style="left:391px;width:66px">24.56</div>
<div class="td" style="left:457px;width:66px">26.72</div>
<div class="td" style="left:523px;width:58px">27.2</div>
<div class="td" style="left:581px;width:67px">24.64</div>
<div class="td" style="left:648px;width:67px">18.48</div>
<div class="td" style="left:715px;width:67px">25.44</div>
<div class="td" style="left:782px;width:66px">26.8</div>
<div class="td" style="left:848px;width:59px">19.76</div>
<div class="td" style="left:907px;width:86px;border-right:none">346.80</div>
</div>
<div class="tr odd" style="top:391px">
<div class="td" style="left:0px;width:57px">0.16</div>
<div class="td" style="left:57px;width:66px">0.08</div>
<div class="td" style="left:123px;width:67px">0.16</div>
<div class="td" style="left:190px;width:67px">0.08</div>
<div class="td" style="left:257px;width:67px">0.16</div>
<div class="td" style="left:324px;width:67px">0.08</div>
<div class="td" style="left:391px;width:66px">0.16</div>
<div class="td" style="left:457px;width:66px">0.08</div>
<div class="td" style="left:523px;width:58px">8.8</div>
<div class="td" style="left:581px;width:67px">10.48</div>
<div class="td" style="left:648px;width:67px">10.4</div>
<div class="td" style="left:715px;width:67px">10.56</div>
<div class="td" style="left:782px;width:66px">10.56</div>
<div class="td" style="left:848px;width:59px">7.84</div>
<div class="td" style="left:907px;width:86px;border-right:none">59.60</div>
</div>
<div class="tr even" style="top:430px">
<div class="td" style="left:0px;width:57px">30</div>
<div class="td" style="left:57px;width:66px">30</div>
<div class="td" style="left:123px;width:67px">30</div>
<div class="td" style="left:190px;width:67px">30</div>
<div class="td" style="left:257px;width:67px">30</div>
<div class="td" style="left:324px;width:67px">30</div>
<div class="td" style="left:391px;width:66px">30</div>
<div class="td" style="left:457px;width:66px">27</div>
<div class="td" style="left:523px;width:58px">30</div>
<div class="td" style="left:581px;width:67px">27</div>
<div class="td" style="left:648px;width:67px">30</div>
<div class="td" style="left:715px;width:67px">30</div>
<div class="td" style="left:782px;width:66px">30</div>
<div class="td" style="left:848px;width:59px">21</div>
<div class="td" style="left:907px;width:86px;border-right:none">405.00</div>
</div>
<div class="tr odd" style="top:469px">
<div class="td" style="left:0px;width:57px">18</div>
<div class="td" style="left:57px;width:66px">18</div>
<div class="td" style="left:123px;width:67px">15</div>
<div class="td" style="left:190px;width:67px">18</div>
<div class="td" style="left:257px;width:67px">18</div>
<div class="td" style="left:324px;width:67px">18</div>
<div class="td" style="left:391px;width:66px">18</div>
<div class="td" style="left:457px;width:66px">18</div>
<div class="td" style="left:523px;width:58px">18</div>
<div class="td" style="left:581px;width:67px">15</div>
<div class="td" style="left:648px;width:67px">18</div>
<div class="td" style="left:715px;width:67px">15</div>
<div class="td" style="left:782px;width:66px">18</div>
<div class="td" style="left:848px;width:59px">12</div>
<div class="td" style="left:907px;width:86px;border-right:none">237.00</div>
</div>
<div class="tr even" style="top:508px">
<div class="td" style="left:0px;width:57px">0</div>
<div class="td" style="left:57px;width:66px">0</div>
<div class="td" style="left:123px;width:67px">0</div>
<div class="td" style="left:190px;width:67px">0</div>
<div class="td" style="left:257px;width:67px">0</div>
<div class="td" style="left:324px;width:67px">0</div>
<div class="td" style="left:391px;width:66px">0</div>
<div class="td" style="left:457px;width:66px">3</div>
<div class="td" style="left:523px;width:58px">18</div>
<div class="td" style="left:581px;width:67px">27</div>
<div class="td" style="left:648px;width:67px">51</div>
<div class="td" style="left:715px;width:67px">150</div>
<div class="td" style="left:782px;width:66px">117</div>
<div class="td" style="left:848px;width:59px">66</div>
<div class="td" style="left:907px;width:86px;border-right:none">432.00</div>
</div>
<div class="tr odd" style="top:547px">
<div class="td" style="left:0px;width:57px"></div>
<div class="td" style="left:57px;width:66px"></div>
<div class="td" style="left:123px;width:67px"></div>
<div class="td" style="left:190px;width:67px"></div>
<div class="td" style="left:257px;width:67px"></div>
<div class="td" style="left:324px;width:67px"></div>
<div class="td" style="left:391px;width:66px"></div>
<div class="td" style="left:457px;width:66px"></div>
<div class="td" style="left:523px;width:58px"></div>
<div class="td" style="left:581px;width:67px"></div>
<div class="td" style="left:648px;width:67px"></div>
<div class="td" style="left:715px;width:67px"></div>
<div class="td" style="left:782px;width:66px"></div>
<div class="td" style="left:848px;width:59px"></div>
<div class="td" style="left:907px;width:86px;border-right:none"></div>
</div>
</div>
 <div id="bsb"><i></i></div>
</div>


</body></html>
